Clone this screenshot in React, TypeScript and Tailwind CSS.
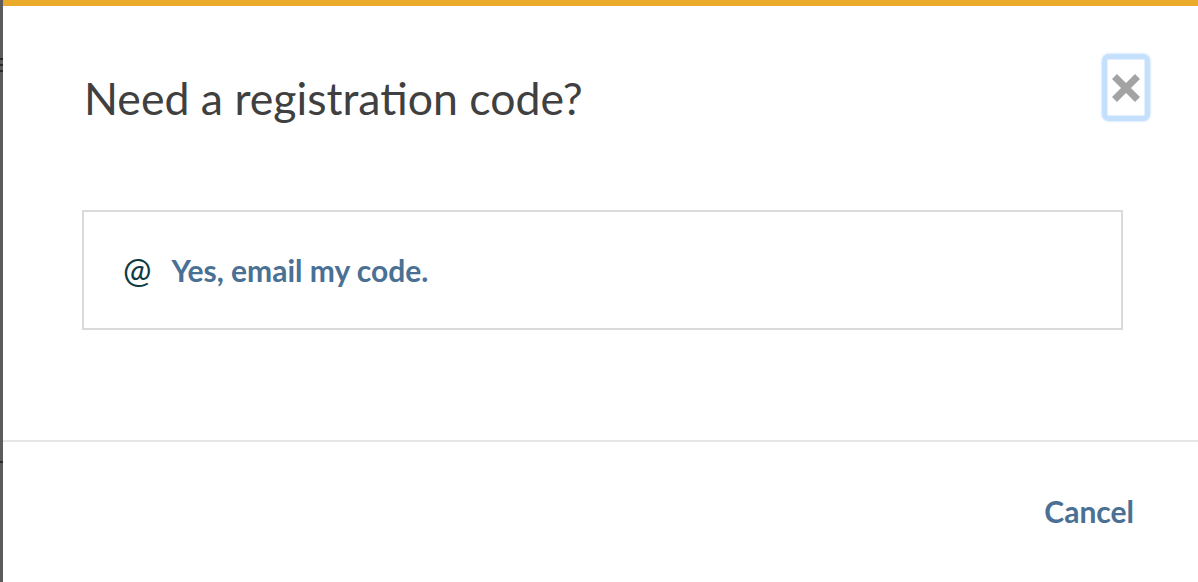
import React from "react";

export default function App() {
  return (
    <div className="flex h-[582px] w-[1198px] overflow-hidden bg-white" style={{ fontFamily: "Lato, 'Noto Sans', sans-serif" }}>
      <div className="relative w-[3px] shrink-0 bg-[#5c5c5c]">
        <div className="absolute left-0 top-[58px] h-[2px] w-[3px] bg-[#2a2a2a]" />
        <div className="absolute left-0 top-[64px] h-[2px] w-[3px] bg-[#2a2a2a]" />
        <div className="absolute left-0 top-[70px] h-[2px] w-[3px] bg-[#2a2a2a]" />
        <div className="absolute left-0 top-[461px] h-[2px] w-[3px] bg-[#2a2a2a]" />
      </div>
      <div className="flex flex-1 flex-col">
        <div className="h-[6px] bg-[#eaab2b]" />
        <div className="box-content flex h-[74px] items-start justify-between pl-[81px] pr-[48px] pt-[48px]">
          <h1 className="mt-[15px] text-[44.6px] leading-[58px] text-[#404040]">Need a registration code?</h1>
          <button className="flex h-[67px] w-[48px] shrink-0 items-center justify-center rounded-[7px] border-[5px] border-[#c4e0fc] bg-white shadow-[0_0_2px_1px_#dcecfd,inset_0_0_0_1px_#e4f0fd]">
            <svg width="30" height="30" viewBox="0 0 30 30">
              <path d="M3.5 3.5 L26.5 26.5 M26.5 3.5 L3.5 26.5" stroke="#a3a3a3" strokeWidth="7" strokeLinecap="butt" />
            </svg>
          </button>
        </div>
        <div className="pl-[79px] pr-[75px] pt-[82px]">
          <div className="flex h-[120px] items-center border-2 border-[#dadada] pl-[39px]">
            <span className="text-[34px] leading-none text-[#0d3a47]">@</span>
            <span className="ml-[20px] text-[30px] font-bold text-[#4a7094]">Yes, email my code.</span>
          </div>
        </div>
        <div className="mt-[110px] h-[2px] bg-[#e6e6e6]" />
        <div className="flex justify-end pr-[64px] pt-[47px]">
          <button className="text-[30px] font-bold leading-[45px] text-[#4a7094]">Cancel</button>
        </div>
      </div>
    </div>
  );
}
